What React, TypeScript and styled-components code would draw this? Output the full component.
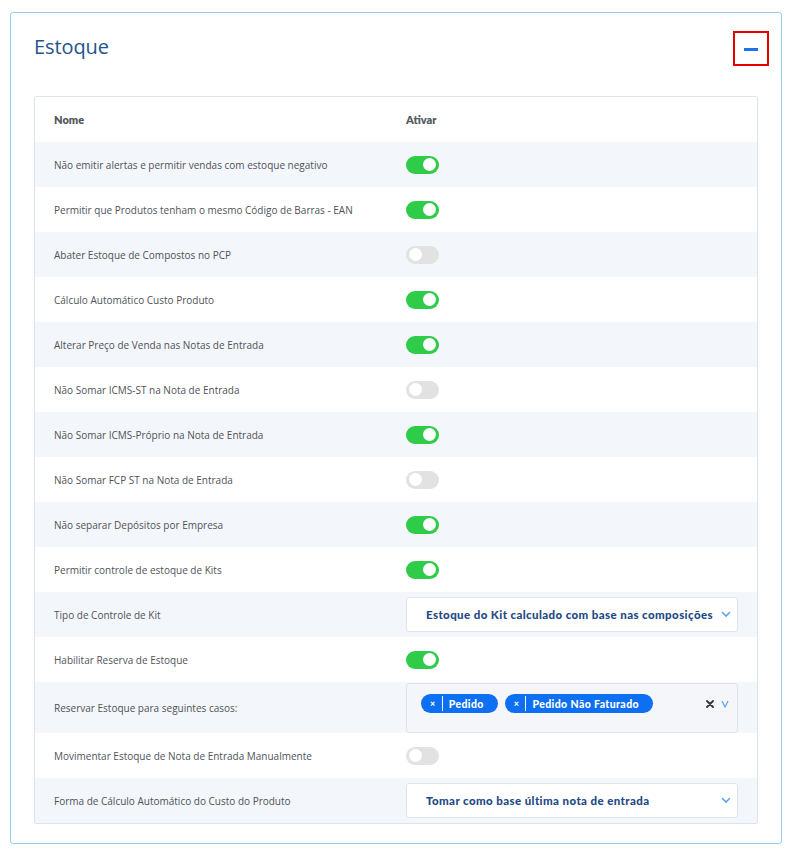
import React from 'react';
import styled, { createGlobalStyle } from 'styled-components';

type RowKind =
  | { type: 'toggle'; on: boolean }
  | { type: 'select'; value: string }
  | { type: 'multi'; values: string[] };

interface SettingRow {
  label: string;
  control: RowKind;
}

const rows: SettingRow[] = [
  { label: 'Não emitir alertas e permitir vendas com estoque negativo', control: { type: 'toggle', on: true } },
  { label: 'Permitir que Produtos tenham o mesmo Código de Barras - EAN', control: { type: 'toggle', on: true } },
  { label: 'Abater Estoque de Compostos no PCP', control: { type: 'toggle', on: false } },
  { label: 'Cálculo Automático Custo Produto', control: { type: 'toggle', on: true } },
  { label: 'Alterar Preço de Venda nas Notas de Entrada', control: { type: 'toggle', on: true } },
  { label: 'Não Somar ICMS-ST na Nota de Entrada', control: { type: 'toggle', on: false } },
  { label: 'Não Somar ICMS-Próprio na Nota de Entrada', control: { type: 'toggle', on: true } },
  { label: 'Não Somar FCP ST na Nota de Entrada', control: { type: 'toggle', on: false } },
  { label: 'Não separar Depósitos por Empresa', control: { type: 'toggle', on: true } },
  { label: 'Permitir controle de estoque de Kits', control: { type: 'toggle', on: true } },
  { label: 'Tipo de Controle de Kit', control: { type: 'select', value: 'Estoque do Kit calculado com base nas composições' } },
  { label: 'Habilitar Reserva de Estoque', control: { type: 'toggle', on: true } },
  { label: 'Reservar Estoque para seguintes casos:', control: { type: 'multi', values: ['Pedido', 'Pedido Não Faturado'] } },
  { label: 'Movimentar Estoque de Nota de Entrada Manualmente', control: { type: 'toggle', on: false } },
  { label: 'Forma de Cálculo Automático do Custo do Produto', control: { type: 'select', value: 'Tomar como base última nota de entrada' } },
];

const GlobalStyle = createGlobalStyle`
  body {
    margin: 0;
    background: #ffffff;
    font-family: 'Open Sans', 'Noto Sans', sans-serif;
  }
`;

const Page = styled.div`
  padding: 12px 6px 8px 10px;
`;

const Card = styled.section`
  border: 1px solid #92d2ea;
  border-radius: 3px;
  padding: 18px 12px 19px 23px;
`;

const CardHeader = styled.header`
  display: flex;
  align-items: center;
  justify-content: space-between;
  height: 35px;
  margin-bottom: 30px;
`;

const Title = styled.h2`
  margin: 0;
  margin-top: -5px;
  font-weight: 400;
  font-size: 20px;
  color: #24548c;
  letter-spacing: -0.1px;
`;

const CollapseButton = styled.button`
  width: 36px;
  height: 35px;
  border: 2px solid #e60000;
  background: transparent;
  padding: 0;
  display: flex;
  align-items: center;
  justify-content: center;
  cursor: pointer;

  span {
    display: block;
    width: 14px;
    height: 3px;
    background: #1a73e8;
    margin-top: 2px;
  }
`;

const Table = styled.div`
  border: 1px solid #dde3ea;
  border-radius: 2px;
  margin-right: 11px;
`;

const Row = styled.div<{ $striped?: boolean; $tall?: boolean }>`
  display: grid;
  grid-template-columns: 352px 1fr;
  align-items: center;
  min-height: 45px;
  padding: ${(p) => (p.$tall ? '1px 19px 0 19px' : '0 19px')};
  background: ${(p) => (p.$striped ? '#f3f6fa' : '#ffffff')};
  box-sizing: border-box;
`;

const HeadCell = styled.div`
  font-family: 'Lato', sans-serif;
  font-weight: 800;
  font-size: 11px;
  color: #555a60;
`;

const NameCell = styled.div`
  font-size: 10px;
  color: #4f5358;
  letter-spacing: 0px;
`;

const ControlCell = styled.div`
  display: flex;
  align-items: center;
`;

const Toggle = styled.span<{ $on: boolean }>`
  position: relative;
  display: inline-block;
  width: 33px;
  height: 18px;
  border-radius: 9px;
  background: ${(p) => (p.$on ? '#2ecc48' : '#e2e2e2')};

  &::after {
    content: '';
    position: absolute;
    top: 2.5px;
    left: ${(p) => (p.$on ? '17px' : '3px')};
    width: 13px;
    height: 13px;
    border-radius: 50%;
    background: #ffffff;
  }
`;

const SelectBox = styled.div`
  flex: 1;
  height: 35px;
  box-sizing: border-box;
  border: 1px solid #e0e4e9;
  border-radius: 3px;
  background: #ffffff;
  display: flex;
  align-items: center;
  justify-content: space-between;
  padding: 0 6px 0 19px;
  font-family: 'Lato', sans-serif;
  font-weight: 900;
  font-size: 11.5px;
  color: #1f4a86;
  letter-spacing: 0.4px;
`;

const MultiBox = styled.div`
  flex: 1;
  height: 50px;
  box-sizing: border-box;
  border: 1px solid #dfe3e8;
  border-radius: 3px;
  background: #f4f6fa;
  display: flex;
  align-items: flex-start;
  justify-content: space-between;
  padding: 10px 8px 0 14px;
`;

const Chips = styled.div`
  display: flex;
  gap: 7px;
`;

const Chip = styled.span`
  display: inline-flex;
  align-items: center;
  height: 19px;
  padding: 0 14px 0 9px;
  border-radius: 10px;
  background: #0d6ff2;
  color: #ffffff;
  font-family: 'Lato', sans-serif;
  font-weight: 900;
  font-size: 10.5px;
  letter-spacing: 0.4px;

  b {
    font-size: 9px;
    font-weight: 900;
    padding-right: 6px;
    border-right: 1px solid #ffffff;
    margin-right: 6px;
    line-height: 15px;
  }
`;

const MultiActions = styled.div`
  display: flex;
  align-items: center;
  gap: 7px;
  height: 19px;
`;

const Chevron = () => (
  <svg width="10" height="7" viewBox="0 0 10 7">
    <polyline points="1.5,1.5 5,5 8.5,1.5" fill="none" stroke="#5aa5ea" strokeWidth="1.6" strokeLinecap="round" />
  </svg>
);

const ClearIcon = () => (
  <svg width="8" height="8" viewBox="0 0 8 8">
    <path d="M1 1 L7 7 M7 1 L1 7" stroke="#2b3545" strokeWidth="1.8" strokeLinecap="round" />
  </svg>
);

const VIcon = () => (
  <svg width="8" height="8" viewBox="0 0 8 8">
    <polyline points="1,1 4,7 7,1" fill="none" stroke="#5aa5ea" strokeWidth="1.2" />
  </svg>
);

function renderControl(c: RowKind) {
  if (c.type === 'toggle') return <Toggle $on={c.on} />;
  if (c.type === 'select') {
    return (
      <SelectBox>
        <span>{c.value}</span>
        <Chevron />
      </SelectBox>
    );
  }
  return (
    <MultiBox>
      <Chips>
        {c.values.map((v) => (
          <Chip key={v}>
            <b>×</b>
            {v}
          </Chip>
        ))}
      </Chips>
      <MultiActions>
        <ClearIcon />
        <VIcon />
      </MultiActions>
    </MultiBox>
  );
}

export default function App() {
  return (
    <>
      <GlobalStyle />
      <Page>
        <Card>
          <CardHeader>
            <Title>Estoque</Title>
            <CollapseButton aria-label="Recolher">
              <span />
            </CollapseButton>
          </CardHeader>
          <Table>
            <Row>
              <HeadCell>Nome</HeadCell>
              <HeadCell>Ativar</HeadCell>
            </Row>
            {rows.map((r, i) => (
              <Row key={r.label} $striped={i % 2 === 0} $tall={r.control.type === 'multi'}>
                <NameCell>{r.label}</NameCell>
                <ControlCell>{renderControl(r.control)}</ControlCell>
              </Row>
            ))}
          </Table>
        </Card>
      </Page>
    </>
  );
}
